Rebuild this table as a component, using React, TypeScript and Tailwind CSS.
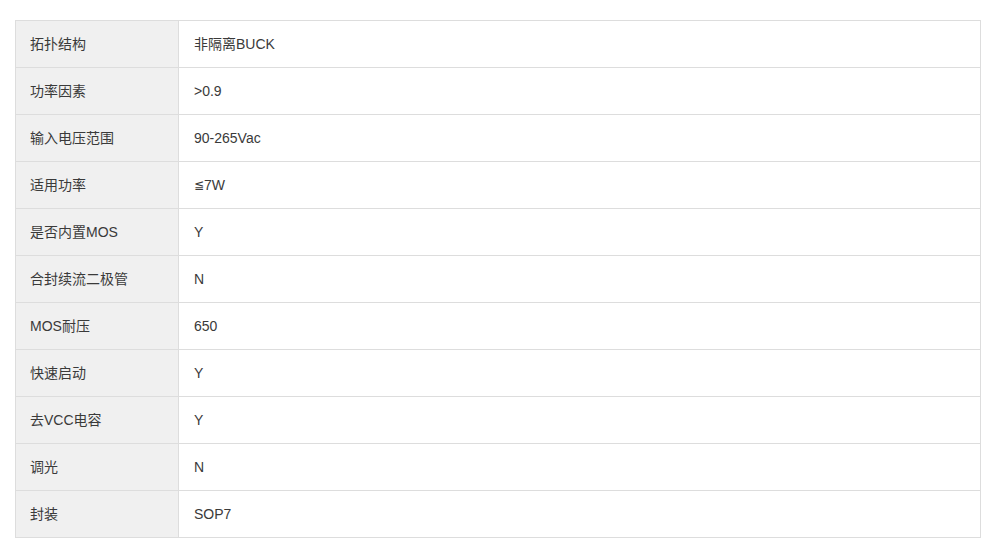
const rows: [string, React.ReactNode][] = [
  ["拓扑结构", "非隔离BUCK"],
  ["功率因素", ">0.9"],
  ["输入电压范围", "90-265Vac"],
  ["适用功率", <><span className="font-['DejaVu_Sans'] text-[12px]">≦</span>7W</>],
  ["是否内置MOS", "Y"],
  ["合封续流二极管", "N"],
  ["MOS耐压", "650"],
  ["快速启动", "Y"],
  ["去VCC电容", "Y"],
  ["调光", "N"],
  ["封装", "SOP7"],
];

export default function App() {
  return (
    <div
      className="min-h-[547px] bg-white pt-[20px] pl-[15px]"
      style={{ fontFamily: '"Liberation Sans", "Noto Sans CJK SC", sans-serif' }}
    >
      <div className="w-[966px] border border-[#dddddd] text-[14px] text-[#3a3a3a]">
        {rows.map(([label, value], i) => (
          <div
            key={label}
            className={
              i === rows.length - 1
                ? "flex h-[46px]"
                : "flex h-[47px] border-b border-[#dddddd]"
            }
          >
            <div className="flex w-[163px] shrink-0 items-center border-r border-[#dddddd] bg-[#f0f0f0] pl-[14px]">
              {label}
            </div>
            <div className="flex flex-1 items-center pl-[15px]">{value}</div>
          </div>
        ))}
      </div>
    </div>
  );
}
